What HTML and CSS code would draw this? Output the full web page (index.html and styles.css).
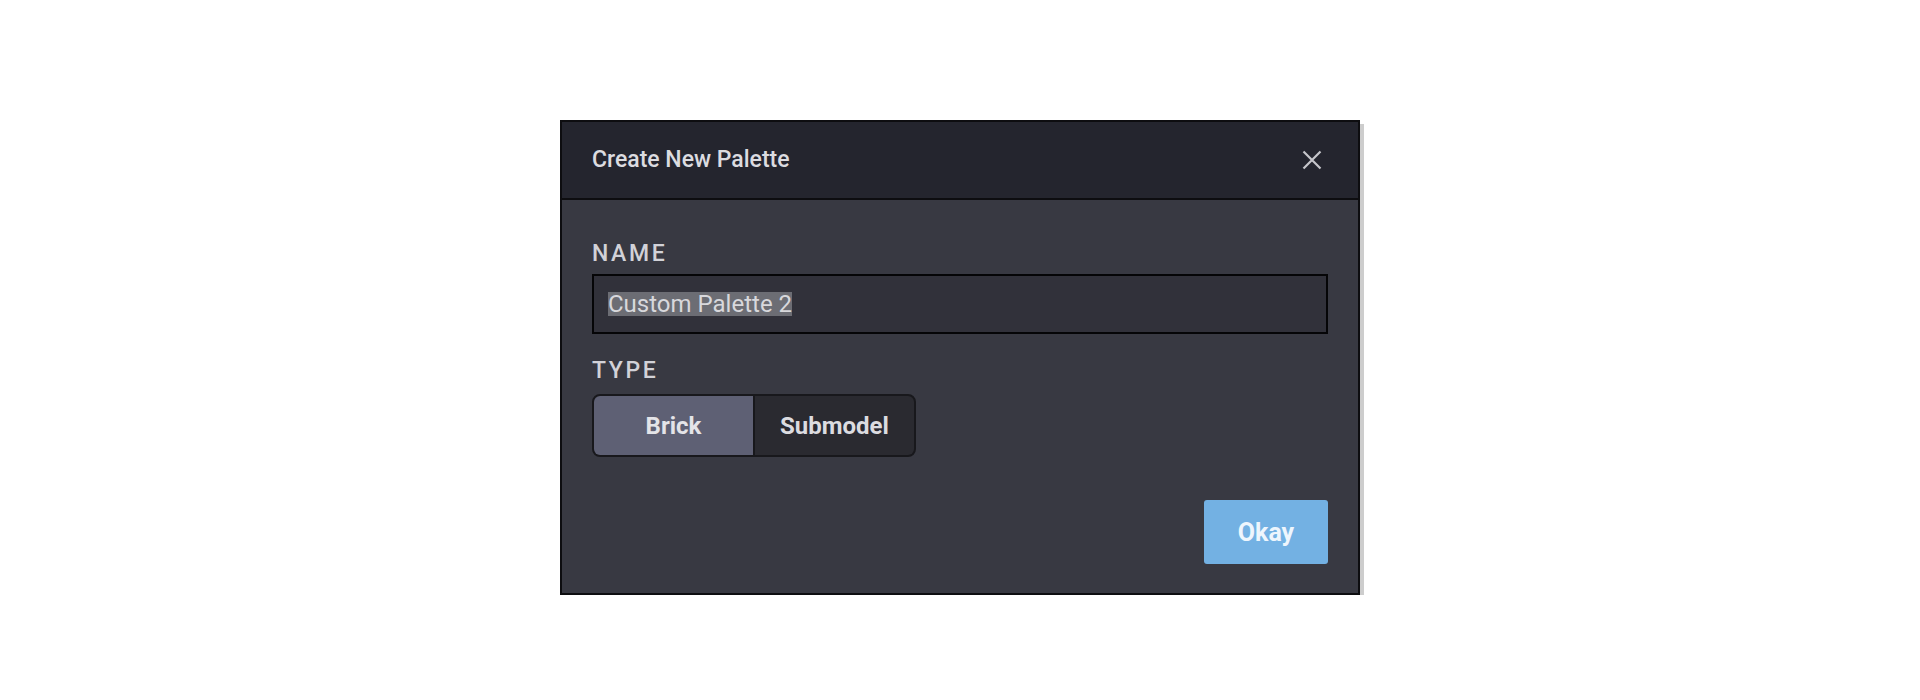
FILE: index.html
```html
<!DOCTYPE html>
<html lang="en">
<head>
<meta charset="utf-8">
<title>Create New Palette</title>
<link rel="stylesheet" href="styles.css">
</head>
<body>
<div class="stage">
  <div class="dialog" role="dialog" aria-labelledby="dlg-title">
    <div class="dialog-header">
      <h1 class="dialog-title" id="dlg-title">Create New Palette</h1>
      <button class="close-btn" aria-label="Close">
        <svg width="20" height="20" viewBox="0 0 20 20" aria-hidden="true">
          <path d="M1.5 1.5 L18.5 18.5 M18.5 1.5 L1.5 18.5" stroke="#c6c6cb" stroke-width="2.2" stroke-linecap="butt" fill="none"/>
        </svg>
      </button>
    </div>
    <div class="dialog-body">
      <div class="field">
        <div class="field-label">NAME</div>
        <div class="text-input"><span class="selected-text">Custom Palette 2</span></div>
      </div>
      <div class="field field-type">
        <div class="field-label">TYPE</div>
        <div class="segmented">
          <button class="segment active">Brick</button>
          <button class="segment">Submodel</button>
        </div>
      </div>
      <div class="actions">
        <button class="btn-primary">Okay</button>
      </div>
    </div>
  </div>
</div>
</body>
</html>
```

FILE: styles.css
```css
* { box-sizing: border-box; }

html, body {
  margin: 0;
  padding: 0;
  background: #ffffff;
  font-family: Roboto, "Liberation Sans", sans-serif;
}

.stage {
  display: flex;
  justify-content: center;
  padding-top: 120px;
}

.dialog {
  width: 800px;
  background: #383942;
  border: 2px solid #0d0d10;
  box-shadow: 4px 4px 0 #cdcdcd;
}

.dialog-header {
  height: 78px;
  display: flex;
  align-items: center;
  justify-content: space-between;
  padding: 0 31px 0 30px;
  background: #24252e;
  border-bottom: 2px solid #0d0d10;
}

.dialog-title {
  margin: 0;
  font-size: 23px;
  font-weight: 500;
  color: #dcdce0;
  line-height: 28px;
}

.close-btn {
  width: 30px;
  height: 30px;
  padding: 0;
  border: 0;
  background: transparent;
  display: flex;
  align-items: center;
  justify-content: center;
}

.dialog-body {
  padding: 40px 30px 29px 30px;
  display: flex;
  flex-direction: column;
}

.field-label {
  font-size: 23px;
  line-height: 28px;
  font-weight: 500;
  letter-spacing: 2.6px;
  color: #d2d2d8;
  margin-bottom: 6px;
}

.field-type {
  margin-top: 23px;
}

.field-type .field-label {
  margin-bottom: 9px;
}

.text-input {
  height: 60px;
  width: 100%;
  border: 2px solid #050507;
  background: #31313a;
  padding: 0 14px;
  display: flex;
  align-items: center;
  font-size: 24px;
  color: #d8d8dc;
}

.selected-text {
  background: #6c6d74;
  line-height: 24px;
  height: 24px;
  display: inline-block;
}

.segmented {
  display: flex;
  width: 324px;
  height: 63px;
  border: 2px solid #18181c;
  border-radius: 8px;
  overflow: hidden;
  background: #18181c;
  gap: 2px;
}

.segment {
  flex: 1;
  border: 0;
  margin: 0;
  padding: 0;
  font-family: inherit;
  font-size: 24px;
  font-weight: 700;
  color: #dcdce0;
  background: #2a2a30;
}

.segment.active {
  background: #5e6074;
  color: #e4e4e8;
}

.actions {
  display: flex;
  justify-content: flex-end;
  margin-top: 43px;
}

.btn-primary {
  width: 124px;
  height: 64px;
  border: 0;
  border-radius: 3px;
  background: #73b1e3;
  color: #eef6fd;
  font-family: inherit;
  font-size: 25px;
  font-weight: 700;
}
```
